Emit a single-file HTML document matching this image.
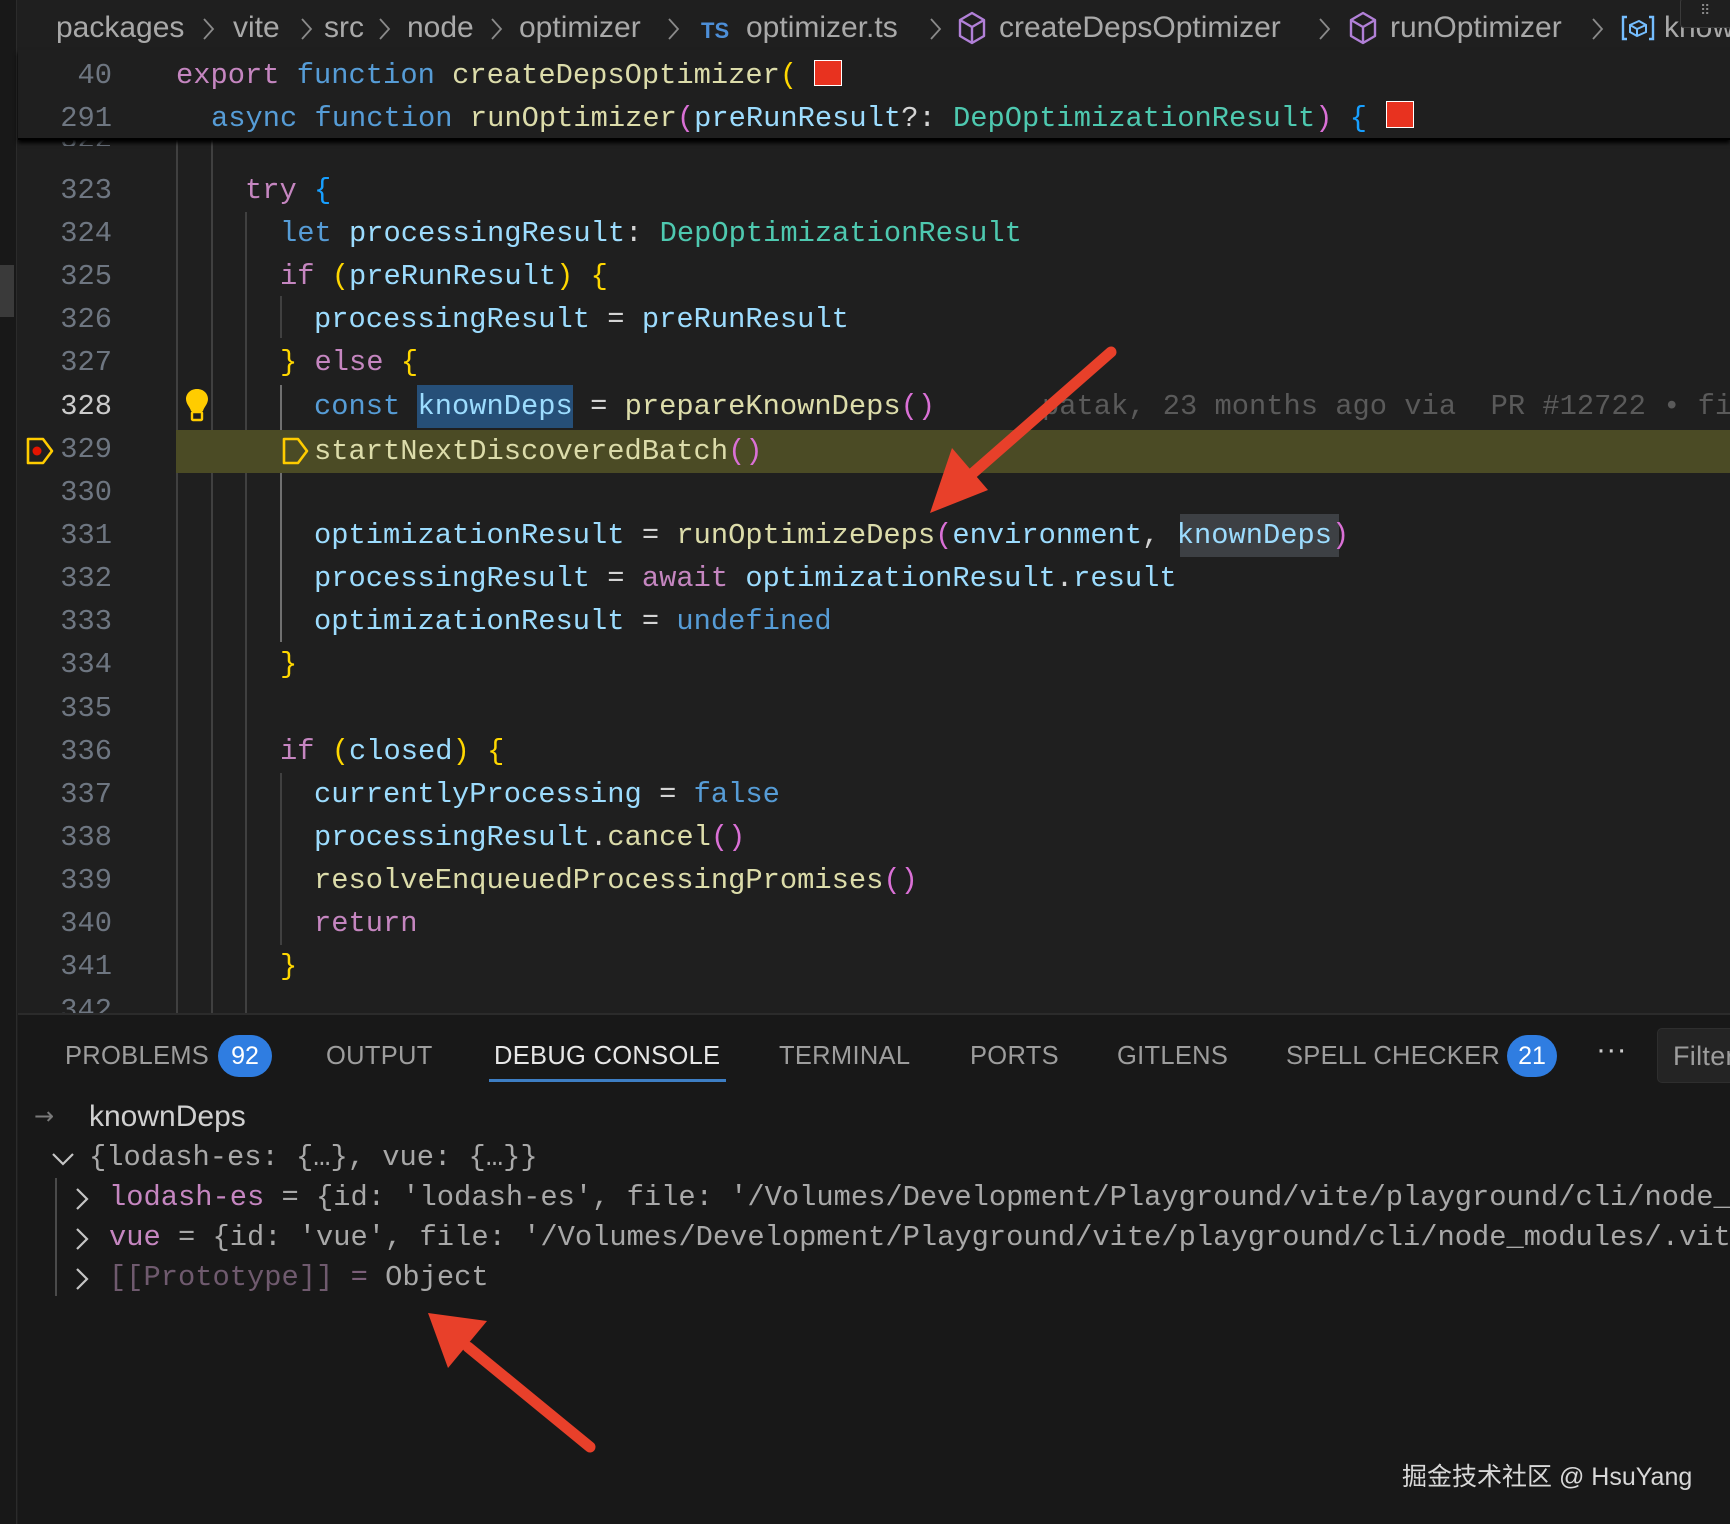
<!DOCTYPE html>
<html><head><meta charset="utf-8"><style>
*{margin:0;padding:0;box-sizing:border-box}
html,body{width:1730px;height:1524px;overflow:hidden}
body{background:#1f1f1f;position:relative;font-family:"Liberation Sans",sans-serif}
.a{position:absolute;white-space:pre}
.m{font-family:"Liberation Mono",monospace;font-size:28.75px;line-height:43px;height:43px}
.ln{position:absolute;width:70px;left:42px;text-align:right;color:#6e7681;font-family:"Liberation Mono",monospace;font-size:28.75px;line-height:43px;height:43px}
.v{color:#9cdcfe}.f{color:#dcdcaa}.kb{color:#569cd6}.kp{color:#c586c0}.t{color:#4ec9b0}.g{color:#ffd700}.o{color:#da70d6}.b{color:#179fff}.p{color:#d4d4d4}
.bc{position:absolute;top:10px;font-size:30px;color:#a9a9a9;line-height:36px;white-space:pre}
.chev{position:absolute;top:17px}
.guide{position:absolute;width:2px;background:#404040}
.tab{position:absolute;top:1040px;font-size:25.5px;color:#9d9d9d;line-height:32px;letter-spacing:.3px}
.badge{position:absolute;background:#2f7de1;color:#fff;border-radius:22px;text-align:center;font-size:25px;line-height:42px;height:42px}
.c{position:absolute;font-family:"Liberation Mono",monospace;font-size:28.75px;line-height:40px;white-space:pre;color:#a8a8a8}
</style></head><body>
<div class="a" style="left:0;top:0;width:17px;height:1524px;background:#181818;border-right:1px solid #2b2b2b"></div>
<div class="a" style="left:0;top:265px;width:14px;height:52px;background:#3a3a3a"></div>

<div class="bc" style="left:56px">packages</div>
<svg class="chev" style="left:201px" width="14" height="24" viewBox="0 0 14 24"><path d="M3 2 L12 12 L3 22" fill="none" stroke="#8a8a8a" stroke-width="1.8"/></svg>
<div class="bc" style="left:233px">vite</div>
<svg class="chev" style="left:299px" width="14" height="24" viewBox="0 0 14 24"><path d="M3 2 L12 12 L3 22" fill="none" stroke="#8a8a8a" stroke-width="1.8"/></svg>
<div class="bc" style="left:324px">src</div>
<svg class="chev" style="left:377px" width="14" height="24" viewBox="0 0 14 24"><path d="M3 2 L12 12 L3 22" fill="none" stroke="#8a8a8a" stroke-width="1.8"/></svg>
<div class="bc" style="left:407px">node</div>
<svg class="chev" style="left:489px" width="14" height="24" viewBox="0 0 14 24"><path d="M3 2 L12 12 L3 22" fill="none" stroke="#8a8a8a" stroke-width="1.8"/></svg>
<div class="bc" style="left:519px">optimizer</div>
<svg class="chev" style="left:666px" width="14" height="24" viewBox="0 0 14 24"><path d="M3 2 L12 12 L3 22" fill="none" stroke="#8a8a8a" stroke-width="1.8"/></svg>
<div class="bc" style="left:701px;font-size:22px;color:#4d8fd8;font-weight:bold;top:13px">TS</div>
<div class="bc" style="left:746px">optimizer.ts</div>
<svg class="chev" style="left:928px" width="14" height="24" viewBox="0 0 14 24"><path d="M3 2 L12 12 L3 22" fill="none" stroke="#8a8a8a" stroke-width="1.8"/></svg>
<svg class="a" style="left:957px;top:11px" width="30" height="34" viewBox="0 0 30 34"><path d="M15 2 L27 9 L27 25 L15 32 L3 25 L3 9 Z M3 9 L15 16 L27 9 M15 16 L15 32" fill="none" stroke="#b180d7" stroke-width="2.4" stroke-linejoin="round"/></svg>
<div class="bc" style="left:999px">createDepsOptimizer</div>
<svg class="chev" style="left:1317px" width="14" height="24" viewBox="0 0 14 24"><path d="M3 2 L12 12 L3 22" fill="none" stroke="#8a8a8a" stroke-width="1.8"/></svg>
<svg class="a" style="left:1348px;top:11px" width="30" height="34" viewBox="0 0 30 34"><path d="M15 2 L27 9 L27 25 L15 32 L3 25 L3 9 Z M3 9 L15 16 L27 9 M15 16 L15 32" fill="none" stroke="#b180d7" stroke-width="2.4" stroke-linejoin="round"/></svg>
<div class="bc" style="left:1390px">runOptimizer</div>
<svg class="chev" style="left:1590px" width="14" height="24" viewBox="0 0 14 24"><path d="M3 2 L12 12 L3 22" fill="none" stroke="#8a8a8a" stroke-width="1.8"/></svg>
<svg class="a" style="left:1620px;top:14px" width="36" height="28" viewBox="0 0 36 28"><path d="M7 3 H3 V25 H7 M29 3 H33 V25 H29" fill="none" stroke="#75beff" stroke-width="2.4"/><path d="M10 11 L19 7 L26 11 L26 18 L17 22 L10 18 Z M10 11 L17 15 L26 11 M17 15 V22" fill="none" stroke="#75beff" stroke-width="2"/></svg>
<div class="bc" style="left:1664px">know</div>
<div class="a" style="left:1680px;top:-2px;width:60px;height:30px;background:#1f1f1f;border:1px solid #3a3a3a;border-radius:4px"></div>
<div class="a" style="left:1700px;top:2px;color:#888;font-size:14px">⠿</div>

<div class="guide" style="left:176px;top:140px;height:873px"></div>
<div class="guide" style="left:211px;top:140px;height:873px"></div>
<div class="guide" style="left:245px;top:212px;height:801px"></div>
<div class="guide" style="left:280px;top:296px;height:42px"></div>
<div class="guide" style="left:280px;top:385px;height:257px;background:#707070"></div>
<div class="guide" style="left:280px;top:773px;height:172px"></div>

<div class="a" style="left:176px;top:430px;width:1554px;height:43px;background:#4b4b25"></div>

<div class="ln" style="top:126px;height:20px;overflow:hidden;line-height:28px">322</div>
<div class="ln" style="top:169px">323</div>
<div class="ln" style="top:212px">324</div>
<div class="ln" style="top:255px">325</div>
<div class="ln" style="top:298px">326</div>
<div class="ln" style="top:341px">327</div>
<div class="ln" style="top:385px;color:#cccccc">328</div>
<div class="ln" style="top:428px">329</div>
<div class="ln" style="top:471px">330</div>
<div class="ln" style="top:514px">331</div>
<div class="ln" style="top:557px">332</div>
<div class="ln" style="top:600px">333</div>
<div class="ln" style="top:643px">334</div>
<div class="ln" style="top:687px">335</div>
<div class="ln" style="top:730px">336</div>
<div class="ln" style="top:773px">337</div>
<div class="ln" style="top:816px">338</div>
<div class="ln" style="top:859px">339</div>
<div class="ln" style="top:902px">340</div>
<div class="ln" style="top:945px">341</div>
<div class="ln" style="top:989px;height:24px;overflow:hidden">342</div>

<svg class="a" style="left:25px;top:436px" width="30" height="30" viewBox="0 0 30 30"><path d="M3 3 H18 L27 15 L18 27 H3 Z" fill="none" stroke="#ffcc00" stroke-width="2.6" stroke-linejoin="round"/><circle cx="12" cy="15" r="4.5" fill="#e51400"/></svg>
<svg class="a" style="left:184px;top:387px" width="26" height="36" viewBox="0 0 26 36"><path d="M13 2 C6 2 2 7 2 12 C2 17 6 20 7 24 H19 C20 20 24 17 24 12 C24 7 20 2 13 2 Z" fill="#ffcc00"/><rect x="8" y="25" width="10" height="8" rx="1" fill="none" stroke="#ffcc00" stroke-width="2.4"/></svg>

<div class="a m" style="left:245px;top:169px"><span class="kp">try</span> <span class="b">{</span></div>
<div class="a m" style="left:280px;top:212px"><span class="kb">let</span> <span class="v">processingResult</span><span class="p">: </span><span class="t">DepOptimizationResult</span></div>
<div class="a m" style="left:280px;top:255px"><span class="kp">if</span> <span class="g">(</span><span class="v">preRunResult</span><span class="g">)</span> <span class="g">{</span></div>
<div class="a m" style="left:314px;top:298px"><span class="v">processingResult</span><span class="p"> = </span><span class="v">preRunResult</span></div>
<div class="a m" style="left:280px;top:341px"><span class="g">}</span> <span class="kp">else</span> <span class="g">{</span></div>
<div class="a" style="left:417px;top:385px;width:156px;height:43px;background:#264f78"></div>
<div class="a m" style="left:314px;top:385px"><span class="kb">const</span> <span class="v">knownDeps</span><span class="p"> = </span><span class="f">prepareKnownDeps</span><span class="o">()</span></div>
<div class="a m" style="left:1042px;top:385px;color:#5a5a5a;width:688px;overflow:hidden">patak, 23 months ago via  PR #12722 • fix</div>
<svg class="a" style="left:281px;top:436px" width="30" height="30" viewBox="0 0 30 30"><path d="M3 3 H17 L26 15 L17 27 H3 Z" fill="none" stroke="#ffcc00" stroke-width="2.6" stroke-linejoin="round"/></svg>
<div class="a m" style="left:314px;top:430px"><span class="f">startNextDiscoveredBatch</span><span class="o">()</span></div>
<div class="a" style="left:1180px;top:514px;width:159px;height:43px;background:#3d4044"></div>
<div class="a m" style="left:314px;top:514px"><span class="v">optimizationResult</span><span class="p"> = </span><span class="f">runOptimizeDeps</span><span class="o">(</span><span class="v">environment</span><span class="p">, </span><span class="v">knownDeps</span><span class="o">)</span></div>
<div class="a m" style="left:314px;top:557px"><span class="v">processingResult</span><span class="p"> = </span><span class="kp">await</span> <span class="v">optimizationResult</span><span class="p">.</span><span class="v">result</span></div>
<div class="a m" style="left:314px;top:600px"><span class="v">optimizationResult</span><span class="p"> = </span><span class="kb">undefined</span></div>
<div class="a m" style="left:280px;top:643px"><span class="g">}</span></div>
<div class="a m" style="left:280px;top:730px"><span class="kp">if</span> <span class="g">(</span><span class="v">closed</span><span class="g">)</span> <span class="g">{</span></div>
<div class="a m" style="left:314px;top:773px"><span class="v">currentlyProcessing</span><span class="p"> = </span><span class="kb">false</span></div>
<div class="a m" style="left:314px;top:816px"><span class="v">processingResult</span><span class="p">.</span><span class="f">cancel</span><span class="o">()</span></div>
<div class="a m" style="left:314px;top:859px"><span class="f">resolveEnqueuedProcessingPromises</span><span class="o">()</span></div>
<div class="a m" style="left:314px;top:902px"><span class="kp">return</span></div>
<div class="a m" style="left:280px;top:945px"><span class="g">}</span></div>

<div class="a" style="left:18px;top:50px;width:1712px;height:90px;background:#1f1f1f;box-shadow:0 3px 4px #000;border-bottom:2px solid #000"></div>
<div class="ln" style="top:54px">40</div>
<div class="ln" style="top:97px">291</div>
<div class="a m" style="left:176px;top:54px"><span class="kp">export</span> <span class="kb">function</span> <span class="f">createDepsOptimizer</span><span class="g">(</span></div>
<div class="a" style="left:814px;top:60px;width:28px;height:26px;background:#e8321f;border:1px solid #fff"></div>
<div class="a m" style="left:211px;top:97px"><span class="kb">async</span> <span class="kb">function</span> <span class="f">runOptimizer</span><span class="o">(</span><span class="v">preRunResult</span><span class="p">?: </span><span class="t">DepOptimizationResult</span><span class="o">)</span> <span class="b">{</span></div>
<div class="a" style="left:1386px;top:101px;width:28px;height:27px;background:#e8321f;border:1px solid #fff"></div>

<div class="a" style="left:18px;top:1013px;width:1712px;height:511px;background:#181818;border-top:2px solid #2b2b2b;overflow:hidden">
<div class="c" style="left:91px;top:163px"><span style="color:#c586c0">lodash-es</span> = {id: 'lodash-es', file: '/Volumes/Development/Playground/vite/playground/cli/node_modules</div>
<div class="c" style="left:91px;top:203px"><span style="color:#c586c0">vue</span> = {id: 'vue', file: '/Volumes/Development/Playground/vite/playground/cli/node_modules/.vite</div>
</div>
<div class="tab" style="left:65px">PROBLEMS</div>
<div class="badge" style="left:218px;top:1035px;width:54px">92</div>
<div class="tab" style="left:326px">OUTPUT</div>
<div class="tab" style="left:494px;color:#e7e7e7">DEBUG CONSOLE</div>
<div class="a" style="left:489px;top:1079px;width:237px;height:3px;background:#3d7ec4"></div>
<div class="tab" style="left:779px">TERMINAL</div>
<div class="tab" style="left:970px">PORTS</div>
<div class="tab" style="left:1117px">GITLENS</div>
<div class="tab" style="left:1286px">SPELL CHECKER</div>
<div class="badge" style="left:1507px;top:1035px;width:50px">21</div>
<div class="tab" style="left:1596px;top:1034px;color:#ccc;font-size:30px">···</div>
<div class="a" style="left:1657px;top:1028px;width:80px;height:55px;background:#242424;border:1px solid #2e2e2e;border-radius:5px"></div>
<div class="tab" style="left:1673px;top:1040px;color:#9d9d9d;font-size:27px">Filter</div>

<div class="c" style="left:34px;top:1096px;color:#7a7a7a;font-family:'DejaVu Sans';font-size:24px">→</div>
<div class="c" style="left:89px;top:1097px;color:#d0d0d0;font-family:'Liberation Sans';font-size:30px">knownDeps</div>
<svg class="a" style="left:50px;top:1148px" width="26" height="22" viewBox="0 0 26 22"><path d="M3 6 L13 16 L23 6" fill="none" stroke="#c5c5c5" stroke-width="2.2"/></svg>
<div class="c" style="left:89px;top:1138px">{lodash-es: {…}, vue: {…}}</div>
<div class="a" style="left:55px;top:1178px;width:2px;height:118px;background:#4a4a4a"></div>
<svg class="a" style="left:72px;top:1186px" width="20" height="26" viewBox="0 0 20 26"><path d="M5 3 L15 13 L5 23" fill="none" stroke="#c5c5c5" stroke-width="2.2"/></svg>
<svg class="a" style="left:72px;top:1226px" width="20" height="26" viewBox="0 0 20 26"><path d="M5 3 L15 13 L5 23" fill="none" stroke="#c5c5c5" stroke-width="2.2"/></svg>
<svg class="a" style="left:72px;top:1266px" width="20" height="26" viewBox="0 0 20 26"><path d="M5 3 L15 13 L5 23" fill="none" stroke="#c5c5c5" stroke-width="2.2"/></svg>
<div class="c" style="left:109px;top:1258px"><span style="color:#6f5a6e">[[Prototype]]</span> <span style="color:#7a5f78">=</span> Object</div>

<div class="a" style="left:1402px;top:1457px;font-size:25px;color:#d8d8d8;font-family:'Liberation Sans','Noto Sans CJK SC',sans-serif">掘金技术社区 @ HsuYang</div>

<svg class="a" style="left:0;top:0" width="1730" height="1524">
<path d="M1111 352 L965 480" stroke="#e8402a" stroke-width="11" stroke-linecap="round"/>
<path d="M930 513 L952 448 L988 490 Z" fill="#e8402a"/>
<path d="M590 1447 L468 1347" stroke="#e8402a" stroke-width="11" stroke-linecap="round"/>
<path d="M428 1313 L487 1321 L448 1368 Z" fill="#e8402a"/>
</svg>
</body></html>
